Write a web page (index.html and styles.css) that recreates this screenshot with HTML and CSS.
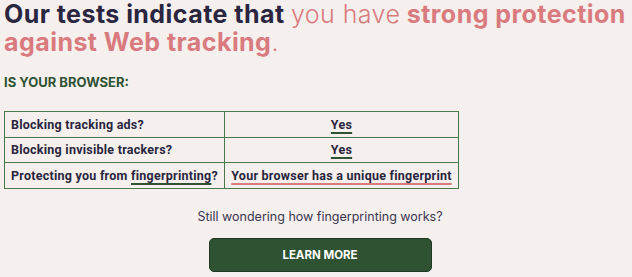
FILE: index.html
```html
<!DOCTYPE html>
<html lang="en">
<head>
    <meta charset="UTF-8">
    <meta name="viewport" content="width=device-width, initial-scale=1.0">
    <title>Cover Your Tracks</title>
    <link rel="stylesheet" href="styles.css">
</head>
<body>
    <div class="results">
        <h1 class="headline">
            <span class="dark">Our tests indicate that</span>
            <span class="light">you have</span>
            <span class="strong">strong protection</span>
            <span class="strong">against Web tracking</span><span class="light">.</span>
        </h1>

        <h2 class="subhead">IS YOUR BROWSER:</h2>

        <table class="results-table">
            <tr>
                <td class="question">Blocking tracking ads?</td>
                <td class="answer"><a href="#" class="good">Yes</a></td>
            </tr>
            <tr>
                <td class="question">Blocking invisible trackers?</td>
                <td class="answer"><a href="#" class="good">Yes</a></td>
            </tr>
            <tr>
                <td class="question">Protecting you from <a href="#" class="good">fingerprinting</a>?</td>
                <td class="answer"><a href="#" class="bad">Your browser has a unique fingerprint</a></td>
            </tr>
        </table>

        <div class="learn">
            <p>Still wondering how fingerprinting works?</p>
            <button class="learn-btn">LEARN MORE</button>
        </div>
    </div>
</body>
</html>
```

FILE: styles.css
```css
body {
    margin: 0;
    padding: 0 4px;
    background: #f5f0ed;
    font-family: Inter, "Liberation Sans", sans-serif;
    color: #2a2540;
}
.headline {
    margin: 0;
    font-size: 25px;
    line-height: 28px;
    font-weight: 700;
    letter-spacing: 0.45px;
}
.headline span {
    display: inline-block;
}
.headline .dark {
    color: #2a2540;
}
.headline .light {
    color: #d97a7e;
    font-weight: 300;
}
.headline .strong {
    color: #d97a7e;
}
.subhead {
    margin: 18px 0 21px;
    font-size: 13px;
    line-height: 16px;
    font-weight: 700;
    color: #2f5233;
}
.results-table {
    width: 455px;
    border-collapse: collapse;
    font-family: Roboto, "Liberation Sans", sans-serif;
    font-size: 12.5px;
    font-weight: 700;
    letter-spacing: 0.25px;
    white-space: nowrap;
}
.results-table td {
    border: 1px solid #4a7a4a;
    height: 24.5px;
    padding: 0 6px;
}
.question {
    width: 207px;
}
.answer {
    text-align: center;
}
.results-table a {
    color: #2a2540;
    text-decoration: underline;
    text-decoration-thickness: 2px;
    text-underline-offset: 3px;
}
.results-table a.good {
    text-decoration-color: #2f5233;
}
.results-table a.bad {
    text-decoration-color: #d97a7e;
}
.learn {
    display: flex;
    flex-direction: column;
    align-items: center;
    padding-left: 8px;
}
.learn p {
    margin: 20px 0 13px;
    font-size: 12.5px;
    line-height: 16px;
    color: #3a3650;
}
.learn-btn {
    width: 223px;
    height: 34px;
    background: #2f5233;
    color: #fff;
    border: 1px solid #1f3a22;
    border-radius: 5px;
    font-family: inherit;
    font-size: 11.5px;
    font-weight: 700;
    cursor: pointer;
}
```
